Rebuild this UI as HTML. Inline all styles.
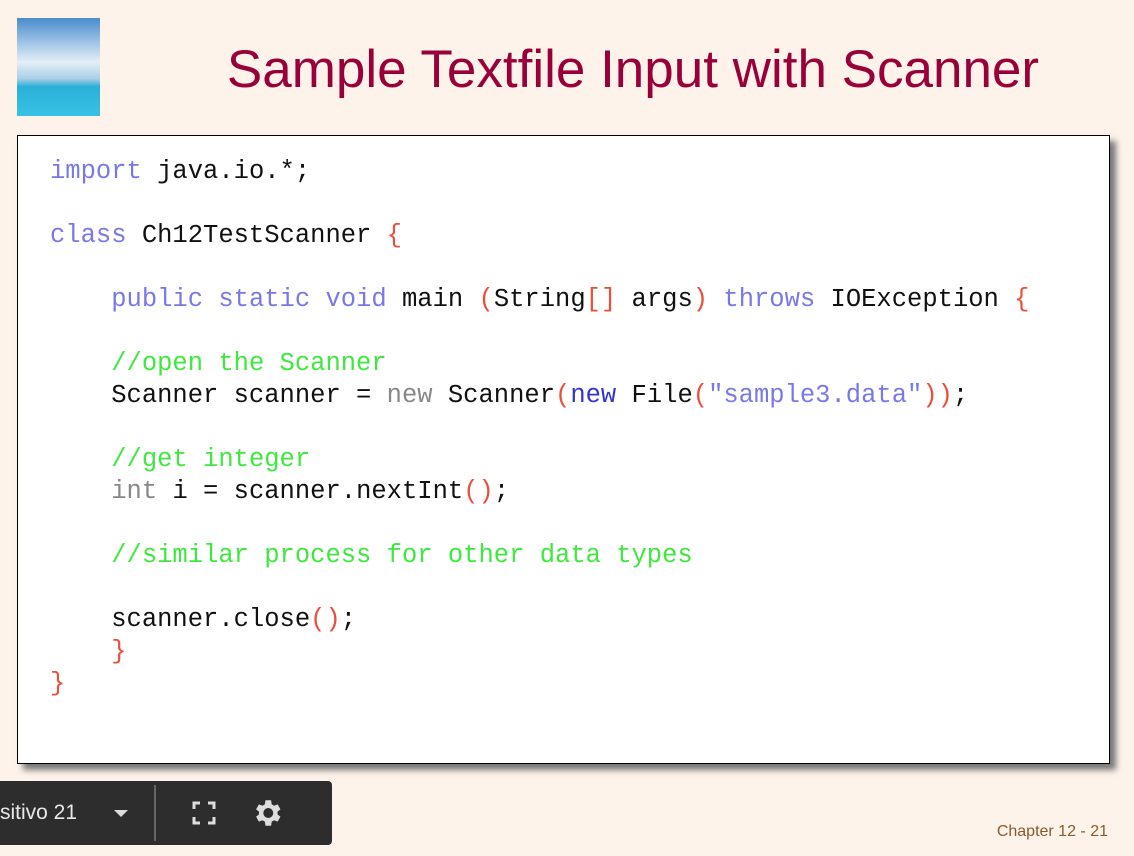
<!DOCTYPE html>
<html><head><meta charset="utf-8"><style>
body{margin:0;width:1134px;height:856px;background:#fdf3ea;position:relative;overflow:hidden;font-family:"Liberation Sans",sans-serif}
.img{position:absolute;left:17px;top:18px;width:83px;height:98px;background:linear-gradient(180deg,#4a8ccc 0%,#9fc4e6 25%,#e4eef6 45%,#a8cfe6 62%,#2bb0d8 70%,#37c2e4 100%)}
h1{position:absolute;left:0;width:1266px;top:40px;margin:0;text-align:center;font-weight:normal;font-size:53px;line-height:60px;color:#99003a}
.box{position:absolute;left:17px;top:135px;width:1091px;height:627px;background:#fff;border:1px solid #000;box-shadow:6px 6px 6px #777}
pre{position:absolute;left:32px;top:20px;margin:0;font-family:"Liberation Mono",monospace;font-size:25.5px;line-height:32px;color:#111}
.k{color:#7a78e6}.b{color:#e8503a}.c{color:#3ee83e}.g{color:#888}.n{color:#3434cc}
.bar{position:absolute;left:-6px;top:781px;width:338px;height:64px;background:#2d2d2d;border-radius:4px;color:#ddd}
.ft{position:absolute;right:26px;top:823px;font-size:16px;color:#8a5a2a}
</style></head><body>
<div class="img"></div>
<h1>Sample Textfile Input with Scanner</h1>
<div class="box"><pre><span class="k">import</span> java.io.*;

<span class="k">class</span> Ch12TestScanner <span class="b">{</span>

    <span class="k">public static void</span> main <span class="b">(</span>String<span class="b">[]</span> args<span class="b">)</span> <span class="k">throws</span> IOException <span class="b">{</span>

    <span class="c">//open the Scanner</span>
    Scanner scanner = <span class="g">new</span> Scanner<span class="b">(</span><span class="n">new</span> File<span class="b">(</span><span class="k">"sample3.data"</span><span class="b">))</span>;

    <span class="c">//get integer</span>
    <span class="g">int</span> i = scanner.nextInt<span class="b">()</span>;

    <span class="c">//similar process for other data types</span>

    scanner.close<span class="b">()</span>;
    <span class="b">}</span>
<span class="b">}</span></pre></div>
<div class="bar">
<div style="position:absolute;left:6px;top:20px;font-size:21px;color:#e8e8e8">sitivo 21</div>
<div style="position:absolute;left:120px;top:29px;width:0;height:0;border-left:7px solid transparent;border-right:7px solid transparent;border-top:7px solid #ddd"></div>
<div style="position:absolute;left:160px;top:4px;width:2px;height:56px;background:#666"></div>
<svg style="position:absolute;left:198px;top:20px" width="24" height="24" viewBox="0 0 24 24" fill="none" stroke="#ddd" stroke-width="3"><path d="M2 8V2h6M16 2h6v6M22 16v6h-6M8 22H2v-6"/></svg>
<svg style="position:absolute;left:256px;top:15px" width="34" height="34" viewBox="0 0 24 24"><path fill="#ddd" d="M19.4 13a7.5 7.5 0 0 0 0-2l2.1-1.6-2-3.5-2.5 1a7.5 7.5 0 0 0-1.7-1L14.9 3h-4l-.4 2.9a7.5 7.5 0 0 0-1.7 1l-2.5-1-2 3.5L6.4 11a7.5 7.5 0 0 0 0 2l-2.1 1.6 2 3.5 2.5-1a7.5 7.5 0 0 0 1.7 1l.4 2.9h4l.4-2.9a7.5 7.5 0 0 0 1.7-1l2.5 1 2-3.5zM12.9 15.5a3.5 3.5 0 1 1 0-7 3.5 3.5 0 0 1 0 7z"/></svg>
</div>
<div class="ft">Chapter 12 - 21</div>
</body></html>
